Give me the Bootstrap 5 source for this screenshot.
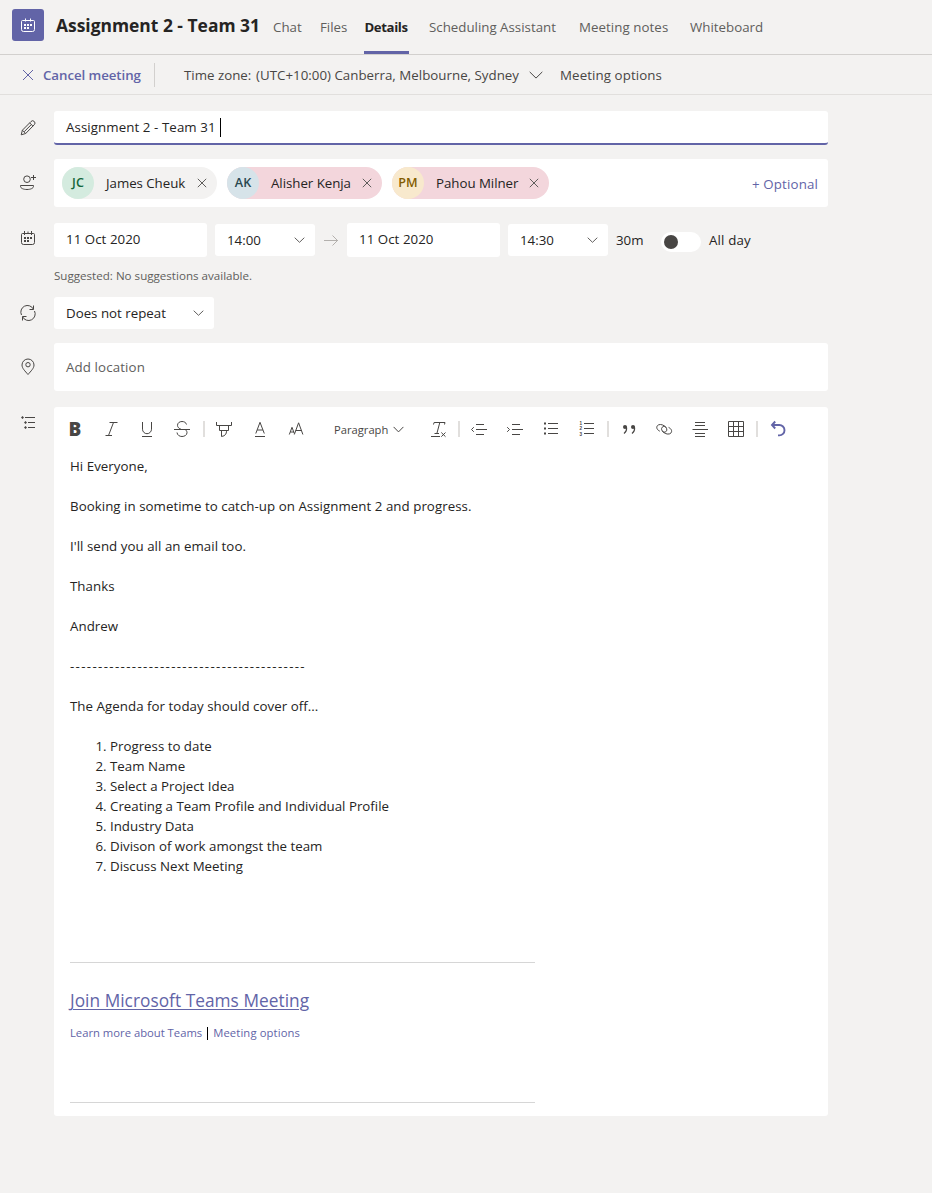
<!DOCTYPE html>
<html lang="en">
<head>
<meta charset="utf-8">
<meta name="viewport" content="width=device-width, initial-scale=1">
<title>Assignment 2 - Team 31</title>
<link href="https://cdn.jsdelivr.net/npm/bootstrap@5.3.0/dist/css/bootstrap.min.css" rel="stylesheet">
<style>
  :root { --brand: #6264a7; --ink: #252423; --ink-2: #484644; --ink-3: #605e5c; --canvas: #f3f2f1; }
  body { background: var(--canvas); color: var(--ink); font: 13.3px/20px "Open Sans", sans-serif; overflow-x: hidden; white-space: nowrap; }
  svg { display: block; flex: none; fill: none; stroke: currentColor; stroke-width: 1; }
  .brand { color: var(--brand) !important; }

  .topbar { height: 55px; border-bottom: 1px solid #d2d0ce; padding-left: 12px; }
  .app-tile { width: 32px; height: 32px; margin-top: 9px; border-radius: 3px; background: var(--brand); color: #fff; }
  .meeting-title { font-size: 17.43px; line-height: 24px; font-weight: 700; margin: 13px 0 0 12px; width: 205px; }
  .tabs .nav-link { color: var(--ink-3); padding: 17px 0 0; height: 54px; }
  .tabs .nav-link.active { color: var(--ink); font-weight: 700; font-size: 13.2px; letter-spacing: -.4px; border-bottom: 3px solid var(--brand); border-radius: 2px 2px 0 0; padding-left: .5px; }
  .tabs .t1 { width: 29px; margin-left: 12px; } .tabs .t2 { width: 27px; margin-left: 18px; }
  .tabs .t3 { width: 45px; margin-left: 17px; } .tabs .t4 { width: 128px; margin-left: 20px; }
  .tabs .t5 { width: 90px; margin-left: 22px; letter-spacing: .06px; } .tabs .t6 { width: 74px; margin-left: 21px; }

  .subbar { height: 40px; border-bottom: 1px solid #e1dfdd; padding-left: 22px; color: var(--ink-2); }
  .subbar .cancel { font-weight: 600; width: 132px; gap: 9px; letter-spacing: -.07px; }
  .subbar .cut { width: 1px; height: 24px; background: #d2d0ce; margin-right: 29px; }
  .zone-label { width: 72px; }
  .zone { width: 304px; gap: 10px; letter-spacing: .02px; }
  .options { letter-spacing: .1px; }

  .form-line { display: flex; width: 828px; }
  .form-line > .lead-icon { width: 54px; flex: none; padding-left: 18px; color: var(--ink-2); }
  .field { background: #fff; border-radius: 3px; }
  .title-field { height: 34px; width: 774px; padding-left: 12px; border-bottom: 2px solid var(--brand); letter-spacing: .08px; }
  .caret { width: 1px; height: 19px; background: #000; margin-left: 4px; }
  .people { height: 48px; width: 774px; padding: 0 10px 0 8px; }
  .chip { height: 32px; border-radius: 16px; background: var(--canvas); }
  .chip svg { color: var(--ink-3); }
  .chip.off { background: #f3d6dc; }
  .chip .face { width: 32px; height: 32px; border-radius: 50%; font-weight: 600; font-size: 12.6px; margin-right: 12px; }
  .chip .g { background: #d4ebdf; color: #13663b; } .chip .b { background: #d6e3e9; color: #28484f; } .chip .y { background: #f8e9cd; color: #835c00; }
  .chip .who { width: 79px; margin-right: 12px; letter-spacing: -.04px; }
  .date-box { width: 153px; height: 34px; padding: 0 0 2px 12px; letter-spacing: .05px; }
  .pick { height: 32px; padding: 0 10px 0 12px; color: var(--ink); }
  .pick svg { color: var(--ink-3); }
  .w-time { width: 100px; }
  .switch { width: 40px; height: 20px; border-radius: 10px; background: #fff; padding: 3px; }
  .switch i { display: block; width: 14px; height: 14px; border-radius: 50%; background: #484644; }
  .hint { font-size: 11.6px; line-height: 16px; color: var(--ink-3); margin: 11px 0 13px 54px; height: 16px; }
  .place { height: 48px; width: 774px; padding-left: 12px; color: var(--ink-3); letter-spacing: .12px; }

  .editor { width: 774px; height: 709px; }
  .tools { height: 44px; padding-left: 3px; color: var(--ink-2); }
  .tool { width: 36px; display: flex; justify-content: center; flex: none; }
  .tool.bold-b { font-weight: 800; font-size: 19px; }
  .bar { flex: none; display: flex; justify-content: center; }
  .bar::after { content: ""; width: 2px; height: 16px; background: #e1dfdd; }
  .style-pick { width: 107px; padding: 1px 0 0 20px; font-size: 11.2px; gap: 5px; }
  .message { padding: 5px 0 0 16px; }
  .message p { margin: 0 0 20px; letter-spacing: .04px; }
  .message ol { margin: 0; padding-left: 40px; }
  .message .dashes { letter-spacing: 1.34px; }
  .rule { width: 465px; height: 1px; background: #d6d6d6; }
  .join { font-size: 17.3px; line-height: 24px; margin-top: 26px; }
  .join a { text-decoration: underline; text-underline-offset: 2px; text-decoration-thickness: 1px; letter-spacing: .03px; }
  .links { font-size: 11.25px; line-height: 20px; margin-top: 10px; margin-bottom: 59px; }
  .links a { text-decoration: none; }
  .links a:last-child { letter-spacing: .12px; }
  .links .pipe { width: 1px; height: 13px; background: #000; margin: 0 5px; }
</style>
</head>
<body>

<header class="topbar d-flex">
  <div class="app-tile d-flex align-items-center justify-content-center">
    <svg width="16" height="16" viewBox="0 0 16 16"><path d="M1.500 4.500v8q0 2 2 2h9q2 0 2-2v-8q0-1-1-1h-11q-1 0-1 1zM5.500 1.500v3M10.500 1.500v3"/><path stroke="none" fill="currentColor" d="M7 7h2v2H7zM10 7h2v2h-2zM4 10h2v2H4zM7 10h2v2H7zM4 7h2v2H4z"/></svg>
  </div>
  <h1 class="meeting-title mb-0">Assignment 2 - Team 31</h1>
  <nav class="nav flex-nowrap tabs">
    <a class="nav-link t1" href="#">Chat</a>
    <a class="nav-link t2" href="#">Files</a>
    <a class="nav-link active t3" href="#">Details</a>
    <a class="nav-link t4" href="#">Scheduling Assistant</a>
    <a class="nav-link t5" href="#">Meeting notes</a>
    <a class="nav-link t6" href="#">Whiteboard</a>
  </nav>
</header>

<div class="subbar d-flex align-items-center">
  <div class="cancel brand d-flex align-items-center">
    <svg width="12" height="12" viewBox="0 0 12 12"><path d="M1 1l10 10M11 1L1 11"/></svg>
    <span>Cancel meeting</span>
  </div>
  <span class="cut"></span>
  <span class="zone-label">Time zone:</span>
  <span class="zone d-flex align-items-center">(UTC+10:00) Canberra, Melbourne, Sydney
    <svg width="14" height="8" viewBox="0 0 14 8"><path d="M.7.9L7 7.100 13.300.9"/></svg>
  </span>
  <span class="options">Meeting options</span>
</div>

<main>
  <div class="form-line mt-3">
    <div class="lead-icon" style="padding-top:7px">
      <svg width="20" height="20" viewBox="0 0 20 20"><path d="M3.200 16.800L4.400 12.200 13 3.500a2.200 2.200 0 0 1 3.300 3.200L7.700 15.500zM4.400 12.200l3.300 3.300M11.700 4.900l3.200 3.200M6.100 13.800L13.300 6.600"/></svg>
    </div>
    <div class="field title-field d-flex align-items-center"><span>Assignment 2 - Team 31</span><span class="caret"></span></div>
  </div>

  <div class="form-line" style="margin-top:14px">
    <div class="lead-icon pt-3">
      <svg width="20" height="16" viewBox="0 0 20 16"><circle cx="9" cy="4.200" r="3.300"/><path d="M2.500 10.500h13v.8c0 2-3 3.200-6.500 3.200s-6.500-1.200-6.500-3.200zM15.500 0v5M13 2.500h5"/></svg>
    </div>
    <div class="field people d-flex align-items-center">
      <div class="chip d-flex align-items-center" style="width:155px;margin-right:10px"><span class="face g d-flex align-items-center justify-content-center">JC</span><span class="who">James Cheuk</span><svg width="10" height="10" viewBox="0 0 10 10"><path d="M.8.8l8.400 8.400M9.200.8L.8 9.200"/></svg></div>
      <div class="chip off d-flex align-items-center" style="width:155px;margin-right:10px"><span class="face b d-flex align-items-center justify-content-center">AK</span><span class="who">Alisher Kenja</span><svg width="10" height="10" viewBox="0 0 10 10"><path d="M.8.8l8.400 8.400M9.200.8L.8 9.200"/></svg></div>
      <div class="chip off d-flex align-items-center" style="width:157px"><span class="face y d-flex align-items-center justify-content-center">PM</span><span class="who" style="width:81px">Pahou Milner</span><svg width="10" height="10" viewBox="0 0 10 10"><path d="M.8.8l8.400 8.400M9.200.8L.8 9.200"/></svg></div>
      <a class="brand text-decoration-none ms-auto" href="#" style="letter-spacing:.15px;padding-top:2px">+ Optional</a>
    </div>
  </div>

  <div class="form-line align-items-center mt-3">
    <div class="lead-icon pb-1">
      <svg width="20" height="20" viewBox="0 0 20 20"><path d="M3.500 6.500v8q0 2 2 2h9q2 0 2-2v-8q0-1-1-1h-11q-1 0-1 1zM6.500 3v4M13.500 3v4M10 3.500v2"/><path stroke="none" fill="currentColor" d="M9 9h2v2H9zM12 9h2v2h-2zM6 12h2v2H6zM9 12h2v2H9zM6 9h2v2H6z"/></svg>
    </div>
    <div class="field date-box d-flex align-items-center me-2">11 Oct 2020</div>
    <div class="field pick w-time d-flex align-items-center justify-content-between">14:00 <svg width="11" height="6" viewBox="0 0 11 6"><path d="M.7.7l4.800 4.600L10.300.7"/></svg></div>
    <svg width="32" height="16" viewBox="0 0 32 16" style="color:#b3b0ad"><path d="M9 8.500h14M17.500 3.500l5 5-5 5"/></svg>
    <div class="field date-box d-flex align-items-center me-2">11 Oct 2020</div>
    <div class="field pick w-time d-flex align-items-center justify-content-between me-2">14:30 <svg width="11" height="6" viewBox="0 0 11 6"><path d="M.7.7l4.800 4.600L10.300.7"/></svg></div>
    <span style="width:45px">30m</span>
    <span class="switch me-2 mt-1"><i></i></span>
    <span style="letter-spacing:.15px">All day</span>
  </div>
  <div class="hint">Suggested: No suggestions available.</div>

  <div class="form-line align-items-center">
    <div class="lead-icon">
      <svg width="20" height="20" viewBox="0 0 20 20"><path d="M3.500 12A6.600 6.600 0 0 1 15.400 6.200M16.500 8A6.600 6.600 0 0 1 4.600 13.800M15.500 2.500V6.500H11.500M4.500 17.500V13.500H8.500"/></svg>
    </div>
    <div class="field pick d-flex align-items-center justify-content-between" style="width:160px">Does not repeat <svg width="11" height="6" viewBox="0 0 11 6"><path d="M.7.7l4.800 4.600L10.300.7"/></svg></div>
  </div>

  <div class="form-line align-items-center" style="margin-top:14px">
    <div class="lead-icon">
      <svg width="20" height="20" viewBox="0 0 20 20"><path d="M10 17.500C7 14 4 11.300 4 8a6 6 0 0 1 12 0c0 3.300-3 6-6 9.500z"/><circle cx="10" cy="7.700" r="2.200"/></svg>
    </div>
    <div class="field place d-flex align-items-center">Add location</div>
  </div>

  <div class="form-line mt-3">
    <div class="lead-icon" style="padding-top:6px">
      <svg width="20" height="20" viewBox="0 0 20 20"><path d="M7 4.500h10M10 9.500h7M10 14.500h7"/><path stroke="none" fill="currentColor" d="M3 4.500l1.500-1.500L6 4.500 4.500 6zM6 9.500L7.500 8 9 9.500 7.500 11zM6 14.500L7.500 13 9 14.500 7.500 16z"/></svg>
    </div>
    <section class="field editor">
      <div class="tools d-flex align-items-center">
        <span class="tool bold-b">B</span>
        <span class="tool"><svg width="24" height="24" viewBox="0 0 24 24"><path d="M10.500 5.500h8M6.500 18.500H13M14.500 5.500l-5 13"/></svg></span>
        <span class="tool"><svg width="24" height="24" viewBox="0 0 24 24"><path d="M7.500 5v7.200a4.500 4.500 0 0 0 9 0V5M7 19.500h10"/></svg></span>
        <span class="tool"><svg width="24" height="24" viewBox="0 0 24 24"><path d="M3 12.500h16M15.500 7.500c-.5-2-2.300-3-4.500-3-2.500 0-4.500 1.500-4.500 3.800 0 2 1.500 3.200 4 4.200M6 15.500c.3 2.600 2.500 4 5 4s5-1.400 5-3.800c0-1.400-.7-2.500-1.800-3.200"/></svg></span>
        <span class="bar" style="width:5px"></span>
        <span class="tool"><svg width="24" height="24" viewBox="0 0 24 24"><path d="M4.500 5v3.500h15V5M7.500 8.500v5h9v-5M9.500 13.500v6l2.500-.7q2.500-1.500 2.500-4v-1.300"/></svg></span>
        <span class="tool"><svg width="24" height="24" viewBox="0 0 24 24"><path d="M7.800 16.500L12 5.300l4.300 11.200M9.200 13h5.700M7 19.500h10"/></svg></span>
        <span class="tool"><svg width="24" height="24" viewBox="0 0 24 24"><path d="M10.300 17.500L14.600 5.800l4.300 11.700M11.700 13.500h5.800M5.300 17.500L8 10.300l2.300 6.200M6.300 15h3.500"/></svg></span>
        <span class="style-pick d-flex align-items-center">Paragraph <svg width="11" height="7" viewBox="0 0 11 7"><path d="M.6.9l4.900 5 4.900-5"/></svg></span>
        <span class="tool"><svg width="24" height="24" viewBox="0 0 24 24"><path d="M6.500 7.500l.6-2H18l-.5 2M12.800 5.500L10 16M7.500 16.500H12M4 19.500h9M14.300 15.500l4.200 4.200M18.500 15.500l-4.200 4.200"/></svg></span>
        <span class="bar" style="width:4px"></span>
        <span class="tool"><svg width="24" height="24" viewBox="0 0 24 24"><path d="M9 7.500h8M9 12.500h11M9 17.500h8M6.800 10.200l-2.300 2.300 2.300 2.300"/></svg></span>
        <span class="tool"><svg width="24" height="24" viewBox="0 0 24 24"><path d="M9 7.500h8M9 12.500h11M9 17.500h8M4.200 10.200l2.300 2.300-2.300 2.300"/></svg></span>
        <span class="tool"><svg width="24" height="24" viewBox="0 0 24 24"><path d="M9 6.500h10M9 11.500h10M9 16.500h10"/><path stroke="none" fill="currentColor" d="M5 5.500h2v2H5zM5 10.500h2v2H5zM5 15.500h2v2H5z"/></svg></span>
        <span class="tool"><svg width="24" height="24" viewBox="0 0 24 24"><path d="M9 6.500h10M9 11.500h10M9 16.500h10"/><g stroke="none" fill="currentColor" font-family="Liberation Sans" font-size="4.600" font-weight="700"><text x="4.600" y="8">1</text><text x="4.600" y="13.400">2</text><text x="4.600" y="18.800">3</text></g></svg></span>
        <span class="bar" style="width:5px"></span>
        <span class="tool"><svg width="24" height="24" viewBox="0 0 24 24"><g stroke="none" fill="currentColor"><circle cx="9" cy="10" r="2"/><circle cx="17" cy="10" r="2"/></g><path stroke-width="1.200" d="M10.400 9.500c.6 3-.5 5.500-2.400 7M18.400 9.500c.6 3-.5 5.500-2.400 7"/></svg></span>
        <span class="tool"><svg width="24" height="24" viewBox="0 0 24 24"><path d="M7.800 14.200C5.200 13 4 10.600 5.300 8.800c1.400-1.900 4.800-1.600 7.200.2 2.300 1.600 3 4 1.700 5.400-1.200 1.300-3.300.9-4-.4M16.600 10.400c2.600 1.200 3.800 3.600 2.500 5.400-1.400 1.900-4.800 1.600-7.200-.2-2.300-1.600-3-4-1.700-5.400 1.200-1.300 3.300-.9 4 .4"/></svg></span>
        <span class="tool"><svg width="24" height="24" viewBox="0 0 24 24"><path d="M7 5.500h10M7 8.500h10M4.500 12.500h15.500M7 16.500h10M7 19.500h10"/></svg></span>
        <span class="tool"><svg width="24" height="24" viewBox="0 0 24 24"><path d="M4.500 4.500h15v15h-15zM4.500 9.500h15M4.500 14.500h15M9.500 4.500v15M14.500 4.500v15"/></svg></span>
        <span class="bar" style="width:6px"></span>
        <span class="tool brand"><svg width="24" height="24" viewBox="0 0 24 24"><path style="stroke-width:1.900" d="M9.200 4.500L6 8l3.200 3.500M6 8h7.300a5.200 5.200 0 0 1 0 10.400h-1.300"/></svg></span>
      </div>
      <div class="message">
        <p>Hi Everyone,</p>
        <p>Booking in sometime to catch-up on Assignment 2 and progress.</p>
        <p>I'll send you all an email too.</p>
        <p>Thanks</p>
        <p>Andrew</p>
        <p class="dashes">------------------------------------------</p>
        <p>The Agenda for today should cover off...</p>
        <ol>
          <li>Progress to date</li>
          <li>Team Name</li>
          <li>Select a Project Idea</li>
          <li>Creating a Team Profile and Individual Profile</li>
          <li>Industry Data</li>
          <li>Divison of work amongst the team</li>
          <li>Discuss Next Meeting</li>
        </ol>
        <div class="rule" style="margin-top:86px"></div>
        <div class="join"><a class="brand" href="#">Join Microsoft Teams Meeting</a></div>
        <div class="links d-flex align-items-center"><a class="brand" href="#">Learn more about Teams</a><span class="pipe"></span><a class="brand" href="#">Meeting options</a></div>
        <div class="rule"></div>
      </div>
    </section>
  </div>
</main>
<script src="https://cdn.jsdelivr.net/npm/bootstrap@5.3.0/dist/js/bootstrap.bundle.min.js"></script>
</body>
</html>
